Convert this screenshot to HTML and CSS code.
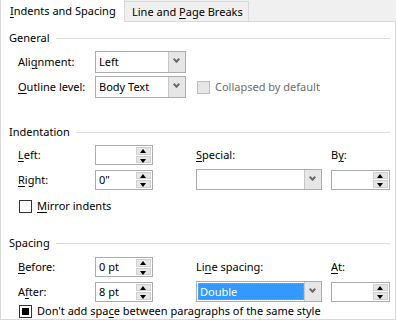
FILE: index.html
```html
<!DOCTYPE html>
<html lang="en">

<head>
	<meta charset="utf-8">
	<title>Paragraph</title>
	<link rel="stylesheet" href="styles.css">
</head>

<body>
	<div class="tabs">
		<div class="tab aktiv"><u>I</u>ndents and Spacing</div>
		<div class="tab">Line and <u>P</u>age Breaks</div>
		<div class="rest"></div>
	</div>

	<div class="panel">

		<section class="gruppe general">
			<h2 class="titel"><span>General</span></h2>
			<div class="felter">
				<label>Ali<u>g</u>nment:</label>
				<div class="vaelg lille"><span class="vaerdi">Left</span><span class="pil"></span></div>
				<div class="tom"></div>
				<div class="tom"></div>

				<label><u>O</u>utline level:</label>
				<div class="vaelg lille"><span class="vaerdi">Body Text</span><span class="pil"></span></div>
				<div class="tjek deaktiv"><span class="boks"></span>Collapsed by default</div>
			</div>
		</section>

		<section class="gruppe indryk">
			<h2 class="titel"><span>Indentation</span></h2>
			<div class="felter">
				<label><u>L</u>eft:</label>
				<div class="spin"><span class="vaerdi"></span><span class="knapper"><i class="op"></i><i class="ned"></i></span></div>
				<label><u>S</u>pecial:</label>
				<label>B<u>y</u>:</label>

				<label><u>R</u>ight:</label>
				<div class="spin"><span class="vaerdi">0"</span><span class="knapper"><i class="op"></i><i class="ned"></i></span></div>
				<div class="vaelg bred"><span class="vaerdi"></span><span class="pil"></span></div>
				<div class="spin smal"><span class="vaerdi"></span><span class="knapper"><i class="op"></i><i class="ned"></i></span></div>

				<div class="tjek linje"><span class="boks"></span><span><u>M</u>irror indents</span></div>
			</div>
		</section>

		<section class="gruppe afstand">
			<h2 class="titel"><span>Spacing</span></h2>
			<div class="felter">
				<label><u>B</u>efore:</label>
				<div class="spin"><span class="vaerdi">0 pt</span><span class="knapper"><i class="op"></i><i class="ned"></i></span></div>
				<label>Li<u>n</u>e spacing:</label>
				<label><u>A</u>t:</label>

				<label>A<u>f</u>ter:</label>
				<div class="spin"><span class="vaerdi">8 pt</span><span class="knapper"><i class="op"></i><i class="ned"></i></span></div>
				<div class="vaelg bred"><span class="vaerdi valgt">Double</span><span class="pil"></span></div>
				<div class="spin smal"><span class="vaerdi"></span><span class="knapper"><i class="op"></i><i class="ned"></i></span></div>

				<div class="tjek linje"><span class="boks delvis"></span><span>Don't add spa<u>c</u>e between paragraphs of the same style</span></div>
			</div>
		</section>

	</div>
</body>

</html>
```

FILE: styles.css
```css
body {
	margin: 0;
	width: 397px;
	height: 322px;
	background: #fff;
	font-family: "Noto Sans", "Open Sans", sans-serif;
	font-size: 11px;
	color: #000;
	overflow: hidden;
}

u {
	text-decoration: underline;
	text-underline-offset: 2px;
}

/* faner */

.tabs {
	display: flex;
	align-items: flex-end;
	height: 22px;
	box-sizing: border-box;
	background: #f0f0f0;
	border-bottom: 1px solid #d9d9d9;
	width: 396px;
}

.tab {
	box-sizing: border-box;
	white-space: nowrap;
	border: 1px solid #d9d9d9;
	border-bottom: none;
}

.tab.aktiv {
	height: 22px;
	line-height: 22px;
	width: 125px;
	padding-left: 9px;
	background: #fff;
	border-top: none;
	margin-bottom: -1px;
}

.tab:not(.aktiv) {
	width: 124px;
	height: 20px;
	line-height: 19px;
	padding-left: 7px;
	border-left: none;
	background: #f0f0f0;
}

/* panel */

.panel {
	box-sizing: border-box;
	width: 396px;
	height: 298px;
	border: 1px solid #d9d9d9;
	border-top: none;
}

.titel {
	display: flex;
	align-items: center;
	margin: 0;
	font-size: 11px;
	font-weight: normal;
	line-height: 16px;
	padding-left: 8px;
	padding-right: 5px;
}

.titel::after {
	content: "";
	flex: 1;
	height: 1px;
	background: #dcdcdc;
	margin-left: 6px;
}

.general {
	padding-top: 8px;
}

.indryk {
	padding-top: 26px;
}

.afstand {
	padding-top: 21px;
}

.felter {
	display: grid;
	grid-template-columns: 77px 101px 135px 59px;
	padding-left: 17px;
	align-items: center;
}

.general .felter {
	margin-top: 5px;
	row-gap: 3px;
	grid-template-rows: 22px 22px;
}

.indryk .felter,
.afstand .felter {
	margin-top: 5px;
	row-gap: 4px;
	grid-template-rows: 20px 21px auto;
}

.afstand .felter {
	margin-top: 6px;
}

label {
	white-space: nowrap;
	line-height: 16px;
}

/* dropdown */

.vaelg {
	box-sizing: border-box;
	display: flex;
	height: 22px;
	border: 1px solid #adadad;
	background: #fff;
}

.vaelg.lille {
	width: 91px;
}

.vaelg.bred {
	width: 126px;
	height: 21px;
}

.vaerdi {
	flex: 1;
	line-height: 18px;
	padding-left: 3px;
	white-space: nowrap;
}

.vaelg .vaerdi {
	line-height: 20px;
}

.vaelg.bred .vaerdi {
	line-height: 19px;
}

.valgt {
	margin: 1px 0 1px 1px;
	line-height: 17px !important;
	padding-left: 2px;
	background: #3399ff;
	color: #fff;
	outline: 1px dotted #e3913a;
	outline-offset: -1px;
}

.pil {
	width: 16px;
	background: #e6e6e6;
	border-left: 1px solid #c6c6c6;
	position: relative;
}

.pil::after {
	content: "";
	position: absolute;
	left: 5px;
	top: 5px;
	width: 3px;
	height: 3px;
	border-right: 2px solid #6a6a6a;
	border-bottom: 2px solid #6a6a6a;
	transform: rotate(45deg);
}

/* spin */

.spin {
	box-sizing: border-box;
	display: flex;
	width: 58px;
	height: 20px;
	border: 1px solid #adadad;
	background: #fff;
}

.spin.smal {
	width: 59px;
}

.knapper {
	display: flex;
	flex-direction: column;
	width: 16px;
	padding: 1px 1px 1px 0;
	box-sizing: border-box;
	gap: 1px;
}

.knapper i {
	flex: 1;
	background: #e6e6e6;
	border: 1px solid #cfcfcf;
	position: relative;
}

.knapper i::after {
	content: "";
	position: absolute;
	left: 3px;
	border-left: 3px solid transparent;
	border-right: 3px solid transparent;
}

.knapper .op::after {
	top: 1px;
	border-bottom: 4px solid #000;
}

.knapper .ned::after {
	top: 2px;
	border-top: 4px solid #000;
}

/* afkrydsning */

.tjek {
	display: flex;
	align-items: center;
	gap: 5px;
	white-space: nowrap;
	line-height: 16px;
}

.general .tjek {
	grid-column: 3 / 5;
	padding-left: 1px;
}

.deaktiv {
	color: #6d6d6d;
}

.boks {
	box-sizing: border-box;
	width: 13px;
	height: 13px;
	border: 1px solid #333;
	background: #fff;
	position: relative;
}

.deaktiv .boks {
	border-color: #bcbcbc;
	background: #e6e6e6;
}

.boks.delvis::after {
	content: "";
	position: absolute;
	left: 2px;
	top: 2px;
	width: 7px;
	height: 7px;
	background: #000;
}

.linje {
	grid-column: 1 / 5;
	padding-left: 1px;
}

.indryk .linje {
	margin-top: 4px;
}

.afstand .linje {
	margin-top: -3px;
}
```
